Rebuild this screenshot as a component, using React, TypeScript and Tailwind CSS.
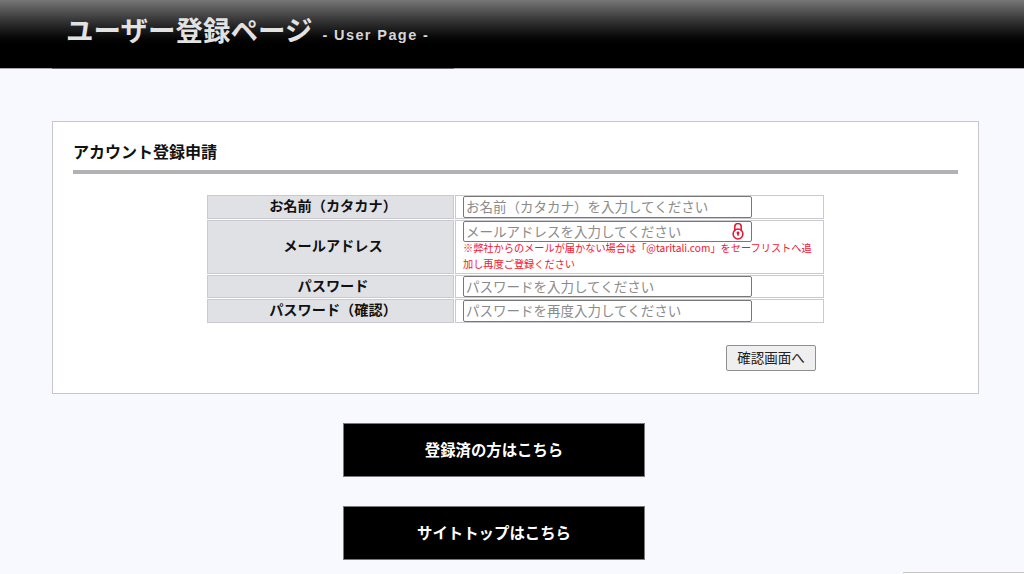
import React from "react";

const font = { fontFamily: '"Noto Sans CJK JP", "Liberation Sans", sans-serif' };

function Lock() {
  return (
    <svg width="12" height="17" viewBox="0 0 12 17" fill="none" stroke="#e8112d" strokeWidth="1.5" className="absolute right-[8px] top-[2px]">
      <path d="M2.8 7.5V3.8a3.2 3.2 0 0 1 6.4 0V7.5" />
      <circle cx="6" cy="11" r="4.9" />
      <circle cx="6" cy="10" r="0.7" fill="#e8112d" />
      <path d="M6 10.4v2.4" />
    </svg>
  );
}

function Field({ placeholder, lock, h }: { placeholder: string; lock?: boolean; h: string }) {
  return (
    <div className={`relative w-[289px] ${h}`}>
      <input
        placeholder={placeholder}
        className="block w-[289px] h-full px-[2px] pb-[2px] bg-white text-[13.5px] leading-[16px] border-[1.5px] border-[#777777] rounded-[2px] placeholder:text-[#8b8b8b] outline-none"
      />
      {lock && <Lock />}
    </div>
  );
}

function Row({ label, h, children }: { label: string; h: string; children: React.ReactNode }) {
  return (
    <tr>
      <th className={`${h} w-[247px] p-0 pl-[5px] bg-[#e0e1e5] border border-[#c9c9cf] text-[14.2px] font-bold text-[#111] text-center align-middle leading-[18px]`}>
        <span className="relative top-[-2px]">{label}</span>
      </th>
      <td className={`${h} w-[369px] p-0 pl-[7px] bg-white border border-[#c9c9cf] align-top`}>{children}</td>
    </tr>
  );
}

export default function App() {
  return (
    <div style={font} className="relative w-[1024px] h-[574px] overflow-hidden bg-[#f8f9ff] text-black">
      <header className="h-[69px] bg-gradient-to-b from-[#777777] via-[#000000] via-[72%] to-[#000000] border-b border-[#a8a8ae]">
        <div className="ml-[52px] w-[402px] h-[69px] border-b border-[#66666c] pl-[14px]">
          <div className="flex items-baseline pt-[10px] text-[#e2e2e2]">
            <span className="text-[27.5px] font-bold leading-[38px]">ユーザー登録ページ</span>
            <span style={{ fontFamily: '"Liberation Sans", sans-serif' }} className="ml-[10px] -translate-y-px text-[14.5px] font-bold tracking-[1.4px] text-[#d6d6d6]">- User Page -</span>
          </div>
        </div>
      </header>

      <main className="pt-[52px] pl-[52px]">
        <section className="w-[927px] h-[273px] bg-white border border-[#c6c6cc] pt-[18px] px-[20px]">
          <h2 className="text-[16px] font-bold leading-[22px] text-[#111]">アカウント登録申請</h2>
          <div className="mt-[8px] h-[4px] bg-[#b1b2b7]" />
          <table className="mt-[20px] ml-[133px] w-[618px] border-separate border-spacing-[1px] table-fixed">
            <tbody>
              <Row label="お名前（カタカナ）" h="h-[24px]">
                <Field h="h-[22px]" placeholder="お名前（カタカナ）を入力してください" />
              </Row>
              <Row label="メールアドレス" h="h-[54px]">
                <Field h="h-[21px]" placeholder="メールアドレスを入力してください" lock />
                <p className="text-[10.2px] leading-[16px] text-[#f5132f] mt-[-2px] pr-[8px]">
                  ※弊社からのメールが届かない場合は「@taritali.com」をセーフリストへ追加し再度ご登録ください
                </p>
              </Row>
              <Row label="パスワード" h="h-[23px]">
                <Field h="h-[21px]" placeholder="パスワードを入力してください" />
              </Row>
              <Row label="パスワード（確認）" h="h-[24px]">
                <Field h="h-[22px]" placeholder="パスワードを再度入力してください" />
              </Row>
            </tbody>
          </table>
          <div className="mt-[21px] flex justify-end pr-[142px]">
            <button className="w-[90px] h-[26px] bg-[#efefef] border border-[#8f8f8f] rounded-[2px] text-[13.5px] text-[#222] leading-none">
              確認画面へ
            </button>
          </div>
        </section>

        <div className="mt-[29px] ml-[291px] w-[302px] flex flex-col gap-[29px]">
          <a className="h-[54px] bg-black border border-[#77777c] flex items-center justify-center text-white text-[15.4px] font-bold">登録済の方はこちら</a>
          <a className="h-[54px] bg-black border border-[#77777c] flex items-center justify-center text-white text-[15.4px] font-bold">サイトトップはこちら</a>
        </div>
      </main>

      <div className="absolute left-[903px] top-[572px] w-[121px] h-[10px] bg-white border-t border-[#c4c4c4]" />
    </div>
  );
}
